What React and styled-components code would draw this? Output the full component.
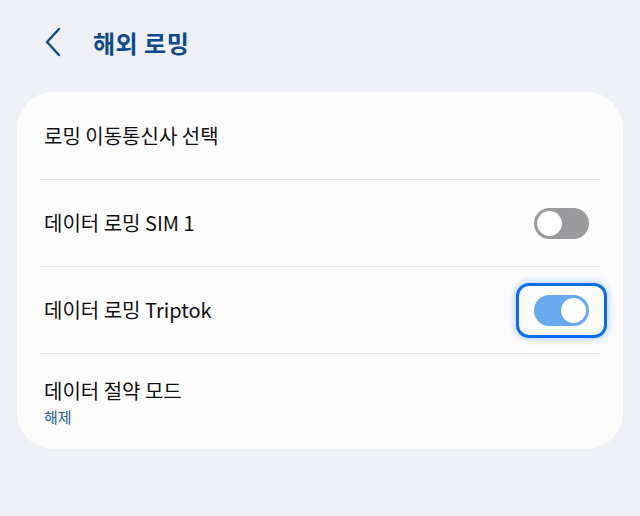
import React, {useState} from 'react';
import styled, {createGlobalStyle} from "styled-components";

const GlobalStyle = createGlobalStyle`
  html, body {
    margin: 0;
    padding: 0;
    background: #eef0f5;
    font-family: "Noto Sans CJK KR", "Noto Sans", sans-serif;
  }
`

const Page = styled.div`
  width: 640px;
  height: 516px;
  background: #eef0f5;
  box-sizing: border-box;
  padding: 0 17px;
  overflow: hidden;
`

const Header = styled.header`
  height: 92px;
  display: flex;
  align-items: center;
  gap: 28px;
  padding-left: 26px;
  padding-bottom: 8px;
  box-sizing: border-box;
`

const BackButton = styled.button`
  border: none;
  background: none;
  padding: 0;
  width: 22px;
  height: 32px;
  display: flex;
  align-items: center;
  cursor: pointer;
`

const Title = styled.h1`
  margin: 0;
  font-size: 24px;
  font-weight: 700;
  color: #0f4a8c;
  letter-spacing: 0.5px;
`

const Card = styled.div`
  background: #fcfcfd;
  border-radius: 36px;
  padding: 0 23px;
`

const Row = styled.div`
  display: flex;
  align-items: center;
  justify-content: space-between;
  height: ${props => props.$height || 87}px;
  border-bottom: ${props => props.$last ? "none" : "1px solid #e1e2e6"};
  padding: 0 4px;
  box-sizing: border-box;
`

const RowText = styled.div`
  display: flex;
  flex-direction: column;
  gap: 2px;
`

const Label = styled.div`
  font-size: 20px;
  color: #111;
  line-height: 28px;
`

const SubLabel = styled.div`
  font-size: 15px;
  color: #1b5a9b;
  line-height: 20px;
`

const FocusRing = styled.div`
  padding: 9px 15px;
  margin-right: -11px;
  border-radius: 13px;
  border: ${props => props.$focused ? "3px solid #0a6cf0" : "3px solid transparent"};
  box-shadow: ${props => props.$focused ? "0 0 6px 2px rgba(10,108,240,0.25)" : "none"};
`

const Track = styled.button`
  position: relative;
  width: 55px;
  height: 31px;
  border-radius: 16px;
  border: none;
  padding: 0;
  cursor: pointer;
  display: block;
  background: ${props => props.$on ? "#6aa9ef" : "#9b9b9d"};
`

const Knob = styled.span`
  position: absolute;
  top: 3px;
  left: ${props => props.$on ? "27px" : "3px"};
  width: 25px;
  height: 25px;
  border-radius: 50%;
  background: #fff;
  transition: left 0.2s;
`

function Toggle({on, onChange, focused}) {
  return (
    <FocusRing $focused={focused}>
      <Track $on={on} onClick={onChange}>
        <Knob $on={on}/>
      </Track>
    </FocusRing>
  );
}

function App() {
  const [sim1, setSim1] = useState(false);
  const [triptok, setTriptok] = useState(true);

  return (
    <Page>
      <GlobalStyle/>
      <Header>
        <BackButton aria-label="back">
          <svg width="20" height="32" viewBox="0 0 20 32">
            <path d="M16 3 L4 16 L16 29" fill="none" stroke="#0f4a8c" strokeWidth="2.4" strokeLinecap="round" strokeLinejoin="round"/>
          </svg>
        </BackButton>
        <Title>해외 로밍</Title>
      </Header>
      <Card>
        <Row $height={88}>
          <Label>로밍 이동통신사 선택</Label>
        </Row>
        <Row>
          <Label>데이터 로밍 SIM 1</Label>
          <Toggle on={sim1} onChange={() => setSim1(!sim1)}/>
        </Row>
        <Row>
          <Label>데이터 로밍 Triptok</Label>
          <Toggle on={triptok} onChange={() => setTriptok(!triptok)} focused/>
        </Row>
        <Row $height={95} $last>
          <RowText>
            <Label>데이터 절약 모드</Label>
            <SubLabel>해제</SubLabel>
          </RowText>
        </Row>
      </Card>
    </Page>
  );
}

export default App;
